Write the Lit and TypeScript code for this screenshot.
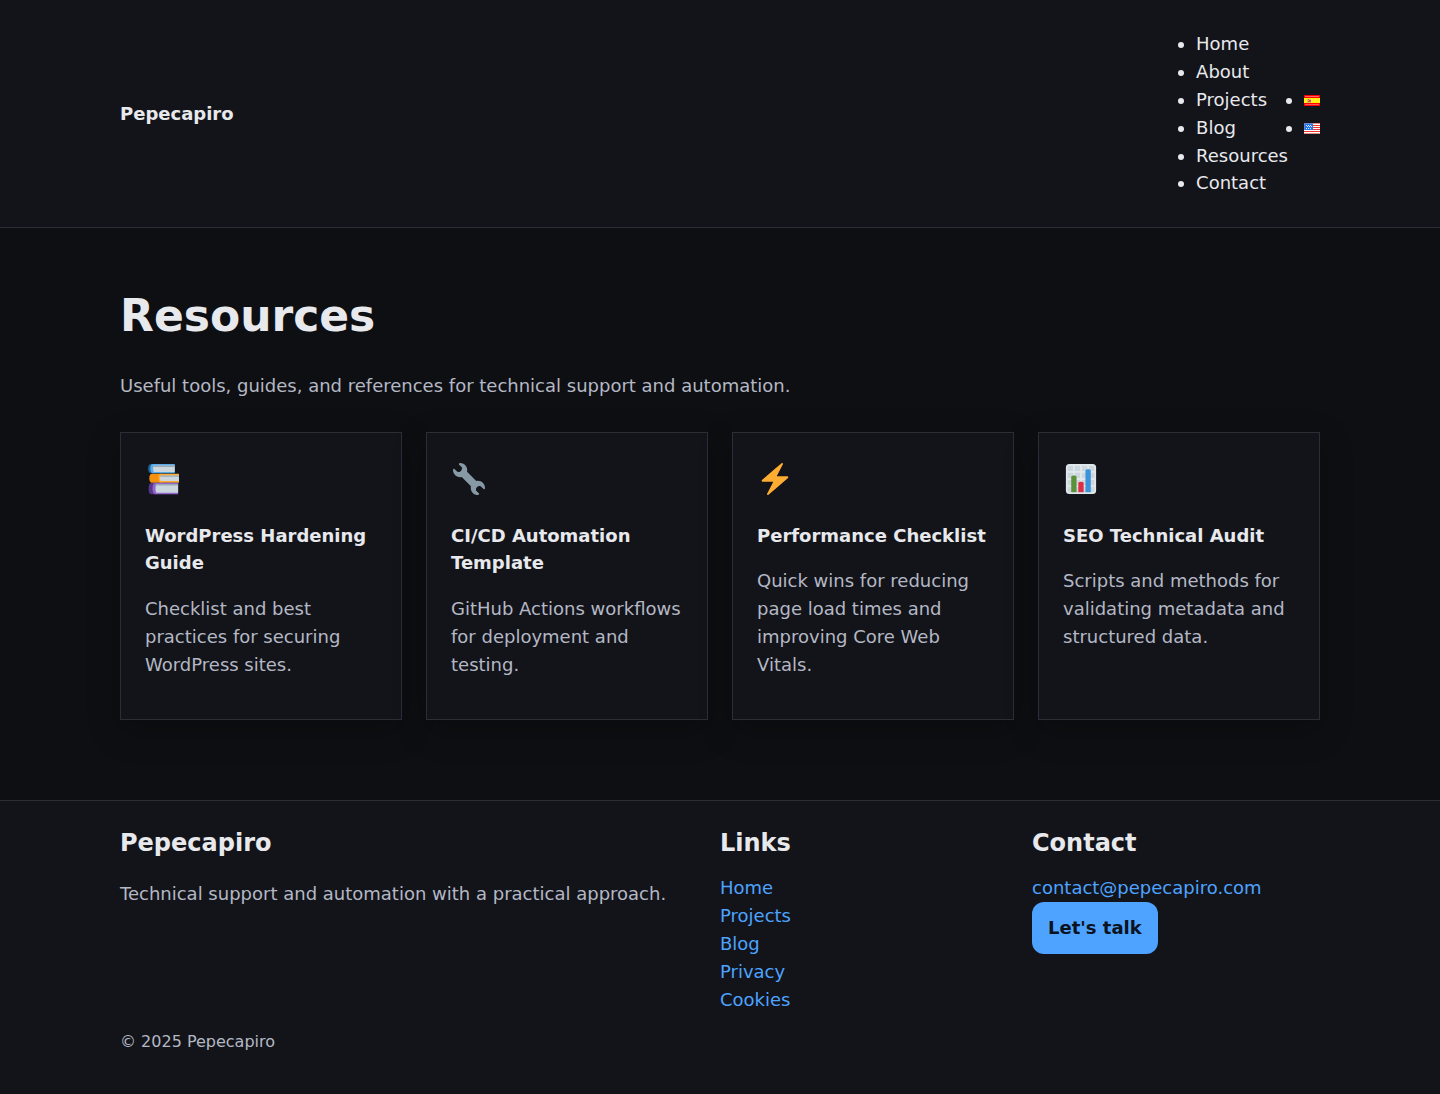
import { LitElement, html, css, svg } from "lit";
import { customElement } from "lit/decorators.js";

const books = svg`
  <g transform="translate(.7 0)">
  <path fill="#226699" d="M4.2 1.1h4v10.400h-4C1.600 11.500.6 9.600.6 6.300s1-5.200 3.600-5.200z"/>
  <path fill="#55ACEE" d="M6 1h24.500v10.600H6C3.900 11.600 3.100 9.500 3.100 6.300S3.900 1 6 1z"/>
  <path fill="#CCD6DD" d="M7.500 2.700h23v7.300h-23c-1.700 0-1.700-7.300 0-7.300z"/>
  <path fill="#9AAAB4" d="M6.700 2.700h23.800v1.700h-24.300z"/>
  <path fill="#F4900C" d="M5 12.200h11v10H5c-2.100 0-3.100-2-3.100-5s1-5 3.100-5z"/>
  <path fill="#FFAC33" d="M15 12.200H35.300v10H15c-2.100 0-3-2.200-3-5s.9-5 3-5z"/>
  <path fill="#CCD6DD" d="M15 14.200h20.300v6H15c-1.600 0-1.600-6 0-6z"/>
  <path fill="#9AAAB4" d="M14.500 14.200h20.800v1.400h-21.200z"/>
  <path fill="#553788" d="M4.500 22.500h6v12.700h-6c-2.400 0-3.400-2-3.400-6.300s1-6.400 3.400-6.400z"/>
  <path fill="#9266CC" d="M9 22.200h25.300v13H9c-2.200 0-3.500-2.200-3.500-6.500s1.300-6.500 3.500-6.500z"/>
  <path fill="#CCD6DD" d="M10.500 23.700h23.800v9.900H10.500c-2.100 0-2.100-9.900 0-9.900z"/>
  <path fill="#9AAAB4" d="M10 23.700h24.300v1.700h-25z"/>
  </g>`;

const wrench = svg`<path fill="#8899A6" d="M27.989 19.977c-.622 0-1.225.078-1.806.213L15.811 9.818c.134-.581.212-1.184.212-1.806C16.023 3.587 12.436 0 8.012 0 7.11 0 5.91.916 6.909 1.915l2.997 2.997s.999 1.998-.999 3.995-3.996.998-3.996.998L1.915 6.909C.916 5.910 0 7.105 0 8.012c0 4.425 3.587 8.012 8.012 8.012.622 0 1.225-.078 1.806-.212l10.371 10.371c-.135.581-.213 1.184-.213 1.806 0 4.425 3.588 8.011 8.012 8.011.901 0 2.101-.916 1.102-1.915l-2.997-2.997s-.999-1.998.999-3.995 3.995-.999 3.995-.999l2.997 2.997c1 .999 1.916-.196 1.916-1.102 0-4.425-3.587-8.012-8.011-8.012z"/>`;

const bolt = svg`<path fill="#FFAC33" d="M32.938 15.651C32.792 15.260 32.418 15 32 15H19.925L26.890 1.458c.219-.426.106-.947-.271-1.243C26.437.071 26.218 0 26 0c-.233 0-.466.082-.653.243L18 6.588 3.347 19.243c-.316.273-.430.714-.284 1.105S3.582 21 4 21h12.075L9.110 34.542c-.219.426-.106.947.271 1.243.182.144.401.215.619.215.233 0 .466-.082.653-.243L18 29.412l14.653-12.655c.317-.273.430-.714.285-1.106z"/>`;

const chart = svg`
  <rect x="1" y="1" width="34" height="34" rx="4" fill="#E1E8ED"/>
  <path fill="#CCD6DD" d="M3 5q0-2 2-2h4v6H3zM11 3h6v6h-6zM19 3h6v6h-6zM27 3h4q2 0 2 2v4h-6zM3 11h6v6H3zM11 11h6v6h-6zM19 11h6v6h-6zM27 11h6v6h-6zM3 19h6v6H3zM11 19h6v6h-6zM19 19h6v6h-6zM27 19h6v6h-6zM3 27h6v6H5q-2 0-2-2zM11 27h6v6h-6zM19 27h6v6h-6zM27 27h6v4q0 2-2 2h-4z"/>
  <path fill="#5C913B" d="M13 33H7V16c0-1.100.9-2 2-2h2c1.100 0 2 .9 2 2z"/>
  <path fill="#3B94D9" d="M29 33h-6V9c0-1.100.9-2 2-2h2c1.100 0 2 .9 2 2z"/>
  <path fill="#DD2E44" d="M21 33h-6V23c0-1.100.9-2 2-2h2c1.100 0 2 .9 2 2z"/>`;

const spain = svg`
  <rect width="16" height="11" fill="#f00"/>
  <rect x="1" y="1" width="14" height="1" fill="#f66"/>
  <rect x="1" y="9" width="14" height="1" fill="#f55"/>
  <rect y="3" width="16" height="5" fill="#fe0"/>
  <rect x="1" y="4" width="14" height="3" fill="#ffef20"/>
  <rect x="3" y="4" width="4" height="4" fill="#eab868"/>
  <path fill="#cf5548" d="M4 4h1v1H4zM4 6h1v1H4zM5 5h2v2H5z"/>
  <path fill="#d9b3a0" d="M5 4h2v1H5z"/>`;

const usa = svg`
  <rect width="16" height="11" fill="#fff"/>
  <path fill="#f0352c" d="M8 2h8v1H8zM8 4h8v1H8zM8 6h8v1H8zM0 8h16v1H0z"/>
  <path fill="#e08a80" d="M0 0h16v1H0zM0 10h16v1H0z"/>
  <rect x="0" y="0" width="9" height="7" fill="#1f78f0"/>
  <path fill="#7080d0" d="M0 0h9v1H0zM0 1h1v6H0z"/>
  <path fill="#dfeaff" d="M2 2h1v1H2zM4 2h1v1H4zM6 2h1v1H6zM3 3h1v1H3zM5 3h1v1H5zM7 3h1v1H7zM2 5h1v1H2zM4 5h1v1H4zM6 5h1v1H6z"/>`;

const cards = [
  { icon: books, title: "WordPress Hardening Guide", text: "Checklist and best practices for securing WordPress sites." },
  { icon: wrench, title: "CI/CD Automation Template", text: "GitHub Actions workflows for deployment and testing." },
  { icon: bolt, title: "Performance Checklist", text: "Quick wins for reducing page load times and improving Core Web Vitals." },
  { icon: chart, title: "SEO Technical Audit", text: "Scripts and methods for validating metadata and structured data." },
];

@customElement("app-root")
export class AppRoot extends LitElement {
  static styles = css`
    :host {
      display: flex;
      flex-direction: column;
      min-height: 100vh;
      background: #0e0f12;
      color: #e8e9ed;
      font: 18px/1.55 "DejaVu Sans", sans-serif;
    }
    * { box-sizing: border-box; }
    h1, h2, h3, p, ul { margin: 0; }
    a { color: inherit; text-decoration: none; }
    .container { width: 1200px; margin: 0 auto; }
    header { background: #131419; border-bottom: 1px solid #2b2d37; }
    .bar {
      display: flex;
      align-items: center;
      justify-content: space-between;
      padding: 30px 0;
    }
    .brand { font-weight: 700; }
    .menus { display: flex; align-items: center; gap: 16px; }
    .menus ul { padding: 0; }
    .flag { display: inline-block; width: 16px; height: 11px; }
    main { padding: 62px 0 80px; }
    h1 { font-size: 44px; line-height: 1.2; }
    .lead { margin: 29px 0 32px; color: #b4b8c5; }
    .cards { display: grid; grid-template-columns: repeat(4, 1fr); gap: 24px; }
    .card {
      padding: 24px 24px 40px;
      background: #131419;
      border: 1px solid #2b2d37;
      box-shadow: 0 10px 30px rgba(0, 0, 0, 0.25);
    }
    .icon { display: block; width: 32px; height: 32px; margin: 6px 0 27px 2px; }
    .card h2 { font-size: 18px; line-height: 27.400px; margin-bottom: 18px; }
    .card p { color: #b4b8c5; }
    footer { flex: 1; background: #131419; border-top: 1px solid #2b2d37; }
    .columns { display: grid; grid-template-columns: 2fr 1fr 1fr; gap: 24px; padding-top: 24px; }
    .columns h3 { font-size: 24px; line-height: 36px; margin-bottom: 13.200px; }
    .about { padding-top: 6px; color: #b4b8c5; }
    .links { display: flex; flex-direction: column; color: #4da3ff; }
    .contact { display: flex; flex-direction: column; align-items: flex-start; color: #4da3ff; }
    .button {
      padding: 12px 16px;
      border-radius: 12px;
      background: #4da3ff;
      color: #0b1220;
      font-weight: 700;
    }
    .copyright { font-size: 16px; color: #b4b8c5; padding-top: 16px; }
  `;

  render() {
    return html`
      <header>
        <div class="container bar">
          <a class="brand">Pepecapiro</a>
          <nav class="menus">
            <ul>
              ${["Home", "About", "Projects", "Blog", "Resources", "Contact"].map(
                (item) => html`<li><a>${item}</a></li>`
              )}
            </ul>
            <ul>
              ${[spain, usa].map(
                (flag) => html`<li><svg class="flag" viewBox="0 0 16 11" shape-rendering="crispEdges">${flag}</svg></li>`
              )}
            </ul>
          </nav>
        </div>
      </header>
      <main>
        <div class="container">
          <h1>Resources</h1>
          <p class="lead">Useful tools, guides, and references for technical support and automation.</p>
          <section class="cards">
            ${cards.map(
              (card) => html`
                <article class="card">
                  <svg class="icon" viewBox="0 0 36 36">${card.icon}</svg>
                  <h2>${card.title}</h2>
                  <p>${card.text}</p>
                </article>
              `
            )}
          </section>
        </div>
      </main>
      <footer>
        <div class="container">
          <div class="columns">
            <div>
              <h3>Pepecapiro</h3>
              <p class="about">Technical support and automation with a practical approach.</p>
            </div>
            <div>
              <h3>Links</h3>
              <div class="links">
                ${["Home", "Projects", "Blog", "Privacy", "Cookies"].map((item) => html`<a>${item}</a>`)}
              </div>
            </div>
            <div>
              <h3>Contact</h3>
              <div class="contact">
                <a>contact@pepecapiro.com</a>
                <a class="button">Let's talk</a>
              </div>
            </div>
          </div>
          <p class="copyright">© 2025 Pepecapiro</p>
        </div>
      </footer>
    `;
  }
}
